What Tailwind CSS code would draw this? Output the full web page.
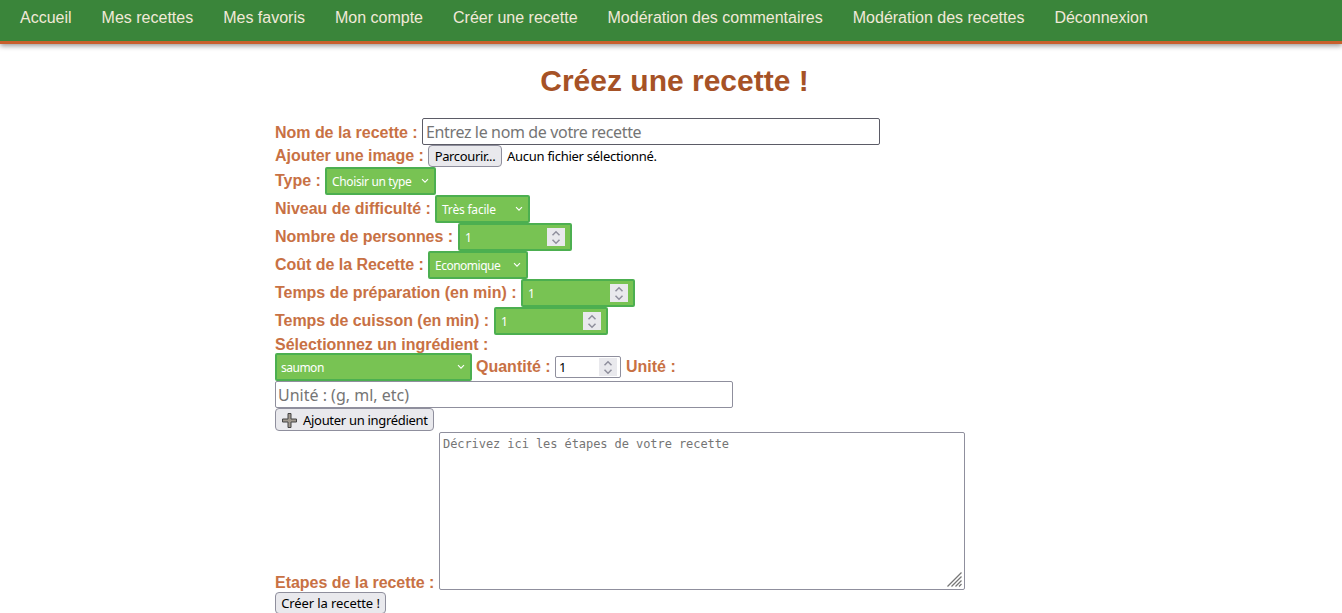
<!DOCTYPE html>
<html lang="fr">
<head>
<meta charset="utf-8">
<title>Créez une recette !</title>
<script src="https://cdn.jsdelivr.net/npm/@tailwindcss/browser@4"></script>
</head>
<body class="h-[613px] overflow-hidden bg-white font-['Liberation_Sans',Arial,sans-serif] text-base">
<svg class="hidden">
  <symbol id="chev" viewBox="0 0 8 6"><path d="M1 1.2 4 4.2 7 1.2" fill="none" stroke="currentColor" stroke-width="1.1"/></symbol>
  <symbol id="spin" viewBox="0 0 18 18"><path d="M0 0h18v18H0z" fill="#e9e9ed"/><path d="M5.5 7.3 9 3.800l3.500 3.500M5.500 11.700 9 15.200l3.500-3.500" fill="none" stroke="#8f8f9d" stroke-width="1.5"/></symbol>
</svg>
<nav class="h-[44px] border-b-3 border-[#c8602c] bg-[#3a853a] shadow-[0_2px_5px_rgba(0,0,0,0.4)]">
  <ul class="flex gap-[30px] pl-5 pt-[6px] leading-6 text-[#f1e9d8] whitespace-nowrap">
    <li>Accueil</li><li>Mes recettes</li><li>Mes favoris</li><li>Mon compte</li><li>Créer une recette</li><li>Modération des commentaires</li><li>Modération des recettes</li><li>Déconnexion</li>
  </ul>
</nav>
<h1 class="mt-[17px] mb-[17px] pl-[7px] text-center text-[30px] leading-10 font-bold text-[#a65226]">Créez une recette !</h1>
<form class="ml-[275px] w-[792px] font-bold text-[#c87144] whitespace-nowrap">
  <div class="flex h-[27px]">
    <label class="w-[147px] shrink-0 pt-[6px] leading-[18px] tracking-[-0.03px]">Nom de la recette :</label>
    <input class="h-[27px] w-[458px] rounded-[2px] border border-[#5b5b66] px-[3px] font-['Noto_Sans',sans-serif] text-base font-normal tracking-[-0.36px] placeholder:text-[#757575]" placeholder="Entrez le nom de votre recette">
  </div>
  <div class="flex h-[22px] font-['Noto_Sans',sans-serif] text-[13px] font-normal text-black">
    <label class="w-[153px] shrink-0 pt-[2px] font-['Liberation_Sans',Arial,sans-serif] text-base leading-[18px] font-bold tracking-[-0.03px] text-[#c87144]">Ajouter une image :</label>
    <button type="button" class="h-[22px] w-[74px] rounded border border-[#8f8f9d] bg-[#e9e9ed] leading-5 tracking-[-0.35px]">Parcourir...</button>
    <span class="ml-[5px] leading-[22px] tracking-[-0.27px]">Aucun fichier sélectionné.</span>
  </div>
  <div class="flex h-7">
    <label class="w-[50px] shrink-0 pt-[5px] leading-[18px]">Type :</label>
    <div class="flex h-7 w-[111px] items-center justify-between rounded-[2px] border-2 border-[#4caf50] bg-[#78c353] pr-[5px] pl-[5px] font-['Noto_Sans',sans-serif] text-[12px] font-normal tracking-[-0.36px] text-white"><span class="pt-[2px]">Choisir un type</span><svg class="h-[6px] w-2"><use href="#chev"/></svg></div>
  </div>
  <div class="flex h-7">
    <label class="w-[160px] shrink-0 pt-[5px] leading-[18px] tracking-[-0.03px]">Niveau de difficulté :</label>
    <div class="flex h-7 w-[95px] items-center justify-between rounded-[2px] border-2 border-[#4caf50] bg-[#78c353] pr-[5px] pl-[5px] font-['Noto_Sans',sans-serif] text-[12px] font-normal tracking-[-0.2px] text-white"><span class="pt-[2px]">Très facile</span><svg class="h-[6px] w-2"><use href="#chev"/></svg></div>
  </div>
  <div class="flex h-7">
    <label class="w-[183px] shrink-0 pt-[5px] leading-[18px] tracking-[-0.03px]">Nombre de personnes :</label>
    <div class="flex h-7 w-[114px] items-center justify-between rounded-[2px] border-2 border-[#4caf50] bg-[#78c353] pr-[5px] pl-[5px] font-['Noto_Sans',sans-serif] text-[12px] font-normal text-white"><span class="pt-[2px]">1</span><svg class="size-[18px]"><use href="#spin"/></svg></div>
  </div>
  <div class="flex h-7">
    <label class="w-[153px] shrink-0 pt-[5px] leading-[18px] tracking-[-0.03px]">Coût de la Recette :</label>
    <div class="flex h-7 w-[100px] items-center justify-between rounded-[2px] border-2 border-[#4caf50] bg-[#78c353] pr-[5px] pl-[5px] font-['Noto_Sans',sans-serif] text-[12px] font-normal tracking-[-0.5px] text-white"><span class="pt-[2px]">Economique</span><svg class="h-[6px] w-2"><use href="#chev"/></svg></div>
  </div>
  <div class="flex h-7">
    <label class="w-[246px] shrink-0 pt-[5px] leading-[18px] tracking-[-0.03px]">Temps de préparation (en min) :</label>
    <div class="flex h-7 w-[114px] items-center justify-between rounded-[2px] border-2 border-[#4caf50] bg-[#78c353] pr-[5px] pl-[5px] font-['Noto_Sans',sans-serif] text-[12px] font-normal text-white"><span class="pt-[2px]">1</span><svg class="size-[18px]"><use href="#spin"/></svg></div>
  </div>
  <div class="flex h-7">
    <label class="w-[219px] shrink-0 pt-[5px] leading-[18px] tracking-[-0.03px]">Temps de cuisson (en min) :</label>
    <div class="flex h-7 w-[114px] items-center justify-between rounded-[2px] border-2 border-[#4caf50] bg-[#78c353] pr-[5px] pl-[5px] font-['Noto_Sans',sans-serif] text-[12px] font-normal text-white"><span class="pt-[2px]">1</span><svg class="size-[18px]"><use href="#spin"/></svg></div>
  </div>
  <div class="h-[18px] pt-px leading-[18px]"><label>Sélectionnez un ingrédient :</label></div>
  <div class="flex h-7">
    <div class="flex h-7 w-[197px] items-center justify-between rounded-[2px] border-2 border-[#4caf50] bg-[#78c353] pr-[5px] pl-[4px] font-['Noto_Sans',sans-serif] text-[12px] font-normal tracking-[-0.5px] text-white"><span class="pt-[2px]">saumon</span><svg class="h-[6px] w-2"><use href="#chev"/></svg></div>
    <label class="ml-[4px] w-[79px] shrink-0 pt-[5px] leading-[18px]">Quantité :</label>
    <div class="mt-[3px] flex h-[22px] w-[66px] items-center justify-between rounded-[2px] border border-[#8f8f9d] bg-white pr-[3px] pl-[3px] font-['Noto_Sans',sans-serif] text-[13px] font-normal text-black"><span class="pt-[2px]">1</span><svg class="size-[18px]"><use href="#spin"/></svg></div>
    <label class="ml-[5px] pt-[5px] leading-[18px]">Unité :</label>
  </div>
  <input class="block h-[27px] w-[458px] rounded-[2px] border border-[#8f8f9d] px-[2px] font-['Noto_Sans',sans-serif] text-base font-normal placeholder:text-[#757575]" placeholder="Unité : (g, ml, etc)">
  <button type="button" class="flex h-[23px] w-[159px] items-center rounded border border-[#8f8f9d] bg-[#e9e9ed] pl-[6px] font-['Noto_Sans',sans-serif] text-[13px] font-normal tracking-[-0.3px] text-black">
    <svg class="mt-px mr-[6px] size-[15px] shrink-0" viewBox="0 0 15 15"><path d="M6 .5h3V6h5.500v3H9v5.500H6V9H.5V6H6z" fill="#a0998f" stroke="#444" stroke-width="1"/></svg><span class="pt-[2px]">Ajouter un ingrédient</span>
  </button>
  <div class="mt-px flex h-[160px]">
    <label class="w-[164px] shrink-0 pt-[142px] leading-[18px] tracking-[-0.03px]">Etapes de la recette :</label>
    <div class="relative h-[158px] w-[526px]">
      <textarea class="block h-[158px] w-[526px] resize-none rounded-[2px] border border-[#8f8f9d] px-[3px] py-1 font-['DejaVu_Sans_Mono',monospace] text-[12px] leading-[15px] font-normal tracking-[-0.075px] placeholder:text-[#757575]" placeholder="Décrivez ici les étapes de votre recette"></textarea>
      <svg class="absolute right-[3px] bottom-[3px] size-[15px]" viewBox="0 0 15 15"><path d="M.5 14.500 14.500.5M4.500 14.500 14.500 4.500M8.500 14.500l6-6M12 14.500l2.500-2.500" fill="none" stroke="#777" stroke-width="1.300"/></svg>
    </div>
  </div>
  <button type="button" class="block h-[22px] w-[111px] rounded border border-[#8f8f9d] bg-[#e9e9ed] font-['Noto_Sans',sans-serif] text-[13px] leading-5 font-normal tracking-[-0.1px] text-black">Créer la recette !</button>
</form>
</body>
</html>
